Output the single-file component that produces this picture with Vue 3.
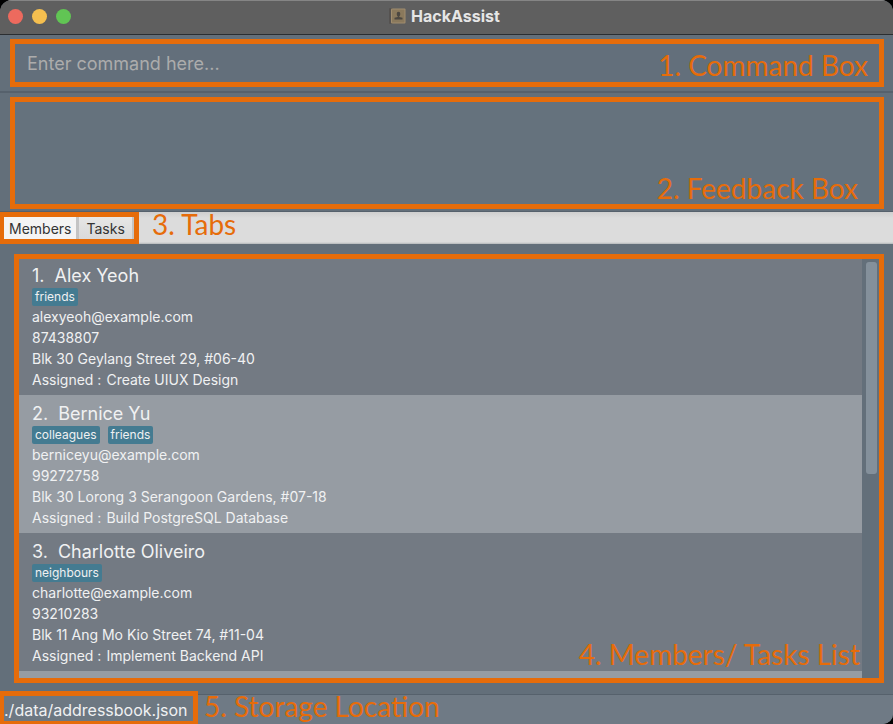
<script setup>
import { ref } from 'vue'

const command = ref('')
const activeTab = ref('Members')
const tabs = ['Members', 'Tasks']

const members = [
  {
    name: 'Alex Yeoh',
    tags: ['friends'],
    email: 'alexyeoh@example.com',
    phone: '87438807',
    address: 'Blk 30 Geylang Street 29, #06-40',
    task: 'Create UIUX Design',
  },
  {
    name: 'Bernice Yu',
    tags: ['colleagues', 'friends'],
    email: 'berniceyu@example.com',
    phone: '99272758',
    address: 'Blk 30 Lorong 3 Serangoon Gardens, #07-18',
    task: 'Build PostgreSQL Database',
  },
  {
    name: 'Charlotte Oliveiro',
    tags: ['neighbours'],
    email: 'charlotte@example.com',
    phone: '93210283',
    address: 'Blk 11 Ang Mo Kio Street 74, #11-04',
    task: 'Implement Backend API',
  },
]
</script>

<template>
  <div class="window">
    <header class="titlebar">
      <div class="lights">
        <button class="light close" type="button" aria-label="Close"></button>
        <button class="light minimise" type="button" aria-label="Minimise"></button>
        <button class="light zoom" type="button" aria-label="Zoom"></button>
      </div>
      <h1 class="title">
        <svg class="app-icon" viewBox="0 0 17 16" aria-hidden="true">
          <rect x="0" y="0" width="4" height="16" rx="1" fill="#555250" />
          <rect x="2" y="0.5" width="14.5" height="15" rx="1" fill="#a08d6e" />
          <rect x="3" y="1.5" width="12.5" height="13" fill="#8a795c" />
          <ellipse cx="9.5" cy="6" rx="1.8" ry="2.2" fill="#4b4741" />
          <path d="M8.700 7h1.600v2l3.200 .8v1.700H5.500V9.800l3.200-.8z" fill="#4b4741" />
        </svg>
        <span>HackAssist</span>
      </h1>
    </header>

    <section class="command">
      <div class="callout">
        <input v-model="command" class="command-input" type="text" placeholder="Enter command here..." aria-label="Command" />
      </div>
      <span class="note note-command">1. Command Box</span>
    </section>

    <section class="feedback">
      <div class="callout feedback-box" role="status"></div>
      <span class="note note-feedback">2. Feedback Box</span>
    </section>

    <nav class="tabstrip">
      <div class="callout tabs" role="tablist">
        <button
          v-for="tab in tabs"
          :key="tab"
          class="tab"
          :class="{ active: tab === activeTab }"
          type="button"
          role="tab"
          :aria-selected="tab === activeTab"
          @click="activeTab = tab"
        >{{ tab }}</button>
      </div>
      <span class="note note-tabs">3. Tabs</span>
    </nav>

    <main class="content">
      <div class="callout list-frame">
        <ol class="list">
          <li v-for="(member, index) in members" :key="member.email" class="member">
            <h2 class="name"><span>{{ index + 1 }}.</span><span>{{ member.name }}</span></h2>
            <div class="tags">
              <span v-for="tag in member.tags" :key="tag" class="tag">{{ tag }}</span>
            </div>
            <p>{{ member.email }}</p>
            <p>{{ member.phone }}</p>
            <p>{{ member.address }}</p>
            <p class="assigned"><span>Assigned :</span><span>{{ member.task }}</span></p>
          </li>
          <li class="next-row" aria-hidden="true"></li>
        </ol>
        <div class="scrollbar"><div class="thumb"></div></div>
      </div>
      <span class="note note-list">4. Members/ Tasks List</span>
    </main>

    <footer class="statusbar">
      <div class="callout path">./data/addressbook.json</div>
      <span class="note note-storage">5. Storage Location</span>
    </footer>
  </div>
</template>

<style>
body {
  margin: 0;
  background: #000;
}
</style>

<style scoped>
.window,
.window * {
  box-sizing: border-box;
}

.window {
  display: flex;
  flex-direction: column;
  min-height: 100vh;
  overflow: hidden;
  border-radius: 12px 12px 10px 0;
  background: #636f7a;
  color: #f0f1f2;
  font-family: Inter, "Liberation Sans", sans-serif;
  font-size: 14px;
}

.titlebar {
  display: grid;
  grid-template-columns: 1fr auto 1fr;
  align-items: center;
  height: 35px;
  padding: 0 8px 2px;
  border-top: 1px solid #858585;
  border-bottom: 1px solid #2b2e31;
  background: #5f5f5f;
}

.lights {
  display: flex;
  gap: 9px;
}

.light {
  width: 15px;
  height: 15px;
  padding: 0;
  border: 0;
  border-radius: 50%;
}

.close { background: #ed6a5e; }
.minimise { background: #f5bf4f; }
.zoom { background: #61c554; }

.title {
  display: flex;
  align-items: center;
  gap: 5px;
  margin: 0;
  padding: 0 4px 2px 0;
  color: #e6e6e6;
  font-size: 16px;
  font-weight: 700;
  line-height: 20px;
}

.app-icon {
  width: 17px;
  height: 16px;
}

.callout {
  border: 5px solid #e66c0a;
}

.note {
  position: absolute;
  color: #e66c0a;
  font-family: Lato, "Liberation Sans", sans-serif;
  font-size: 28px;
  line-height: 32px;
  white-space: nowrap;
}

.command {
  position: relative;
  padding: 4px 9px 4px 10px;
  border-bottom: 2px solid #56616c;
}

.command-input {
  display: block;
  width: 100%;
  height: 38px;
  padding: 0 12px;
  border: 0;
  outline: 0;
  background: #636f7b;
  color: #f0f1f2;
  font-family: inherit;
  font-size: 18px;
}

.command-input::placeholder {
  color: #acacac;
  opacity: 1;
}

.note-command {
  top: 14px;
  right: 25px;
}

.feedback {
  position: relative;
  padding: 4px 9px 2px 10px;
  border-bottom: 1px solid #56616c;
}

.feedback-box {
  height: 112px;
  background: #65727d;
}

.note-feedback {
  right: 35px;
  bottom: 7px;
}

.tabstrip {
  position: relative;
  display: flex;
  height: 32px;
  background: linear-gradient(#cfcfcf, #dcdcdc 6px, #dcdcdc 30px, #b4b8ba);
}

.tabs {
  display: flex;
  gap: 3px;
  padding-right: 2px;
  border-left-width: 4px;
  background: #c4c4c4;
}

.tab {
  padding: 0 7px;
  border: 0;
  background: linear-gradient(#e6e6e6, #dadada);
  color: #333;
  font-family: inherit;
  font-size: 14px;
}

.tab.active {
  padding: 0 5px;
  background: #f4f4f4;
}

.note-tabs {
  top: -4px;
  left: 152px;
}

.content {
  position: relative;
  display: flex;
  flex: 1;
  padding: 10px 9px 11px 14px;
  border-bottom: 1px solid #56616c;
}

.list-frame {
  display: flex;
  flex: 1;
  overflow: hidden;
}

.list {
  display: flex;
  flex: 1;
  flex-direction: column;
  margin: -2px 0 0;
  padding: 0;
  list-style: none;
}

.member {
  padding: 7px 13px 5px;
  background: #737a83;
}

.member:nth-child(even),
.next-row {
  background: #969ca3;
}

.next-row {
  flex: 1;
  min-height: 7px;
}

.name {
  display: flex;
  gap: 10px;
  margin: 0;
  font-size: 18px;
  font-weight: 400;
  line-height: 24px;
}

.tags {
  display: flex;
  gap: 8px;
}

.tag {
  padding: 0 3px;
  border-radius: 2px;
  background: #447b91;
  font-size: 12px;
  line-height: 18px;
}

.member p {
  margin: 0;
  line-height: 21px;
}

.assigned {
  display: flex;
  gap: 5px;
}

.scrollbar {
  width: 17px;
  padding: 3px 2px 0 4px;
  background: #636f7a;
}

.thumb {
  height: 51%;
  border-radius: 3px;
  background: #84909b;
}

.note-list {
  right: 33px;
  bottom: 24px;
}

.statusbar {
  position: relative;
  display: flex;
  height: 29px;
  background: #6f7a85;
}

.path {
  margin-top: -4px;
  padding: 0 5px 0 0;
  border-left-width: 4px;
  border-bottom-width: 3px;
  z-index: 1;
  background: #6d7882;
  font-size: 16px;
  line-height: 29px;
}

.note-storage {
  top: -5px;
  left: 204px;
}
</style>
